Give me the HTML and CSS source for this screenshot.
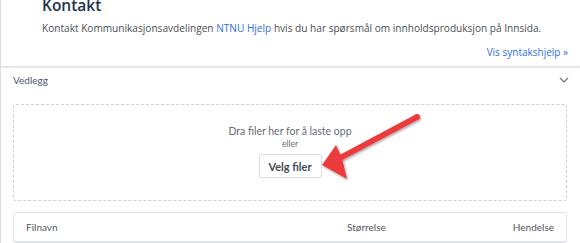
FILE: index.html
```html
<!DOCTYPE html>
<html lang="no">

<head>
  <meta charset="UTF-8">
  <meta name="viewport" content="width=device-width, initial-scale=1.0">
  <title>Vedlegg</title>
  <link rel="stylesheet" href="styles.css">
</head>

<body>
  <div class="page">
    <!-- Contact info -->
    <section class="contact">
      <h2>Kontakt</h2>
      <p>Kontakt Kommunikasjonsavdelingen <a href="#">NTNU Hjelp</a> hvis du har spørsmål om innholdsproduksjon på Innsida.</p>
      <div class="syntax"><a href="#">Vis syntakshjelp »</a></div>
    </section>

    <!-- Attachments -->
    <section class="attachments">
      <div class="attachments-header">
        <span>Vedlegg</span>
        <svg class="chevron" width="10" height="6" viewBox="0 0 10 6">
          <path d="M1 1 L5 5 L9 1" fill="none" stroke="#6b7280" stroke-width="1.2"/>
        </svg>
      </div>

      <div class="dropzone">
        <div class="drop-text">Dra filer her for å laste opp</div>
        <div class="drop-or">eller</div>
        <button class="pick">Velg filer</button>
      </div>

      <div class="files">
        <div class="files-head">
          <span>Filnavn</span>
          <span>Størrelse</span>
          <span>Hendelse</span>
        </div>
      </div>
    </section>

    <!-- Annotation arrow -->
    <svg class="arrow" width="580" height="243" viewBox="0 0 580 243">
      <defs>
        <filter id="shadow" x="-20%" y="-20%" width="140%" height="140%">
          <feDropShadow dx="1" dy="1.5" stdDeviation="1.2" flood-color="#000" flood-opacity="0.35"/>
        </filter>
      </defs>
      <g filter="url(#shadow)" fill="#ec3a3c">
        <path d="M415.6 114.4 L418.4 119.6 L341.4 160.6 L338.6 155.4 Z"/>
        <circle cx="417" cy="117" r="3"/>
        <path d="M322 165 L336 145 L342 158 L347 179 Z"/>
      </g>
    </svg>
  </div>
</body>

</html>
```

FILE: styles.css
```css
body {
  margin: 0;
  background-color: #ffffff;
  font-family: "Open Sans", Arial, sans-serif;
}

.page {
  position: relative;
  height: 243px;
  overflow: hidden;
  border-left: 1px solid #dcdde3;
}

a {
  color: #3170dd;
  text-decoration: none;
}

/* Contact info */
.contact {
  display: flow-root;
  height: 66px;
  padding: 0 12px 0 41px;
  border-bottom: 2px solid #e6e7ee;
}

.contact h2 {
  margin: -5px 0 6px;
  font-size: 15.5px;
  line-height: 20px;
  font-weight: 600;
  color: #233349;
}

.contact p {
  margin: 0;
  font-size: 10.1px;
  line-height: 14px;
  color: #4b4f56;
}

.syntax {
  margin-top: 10px;
  text-align: right;
  font-size: 10px;
  line-height: 14px;
}

/* Attachments */
.attachments {
  padding: 0 13px 0 12px;
  font-family: Lato, "Open Sans", sans-serif;
}

.attachments-header {
  display: flex;
  justify-content: space-between;
  align-items: center;
  padding-top: 5px;
  font-size: 10px;
  line-height: 14px;
  color: #4f5870;
}

.chevron {
  margin-right: -2px;
}

.dropzone {
  margin-top: 17px;
  height: 97px;
  box-sizing: border-box;
  padding-top: 19px;
  border: 1px dashed #cfd0d4;
  border-radius: 3px;
  display: flex;
  flex-direction: column;
  align-items: center;
}

.drop-text {
  font-size: 10.5px;
  line-height: 14px;
  color: #6a6d73;
}

.drop-or {
  font-size: 8.5px;
  line-height: 12px;
  color: #6a6d73;
}

.pick {
  margin-top: 4px;
  width: 63px;
  height: 24px;
  padding: 0;
  border: 1px solid #dcdde2;
  border-radius: 2px;
  background-color: #ffffff;
  font-family: Lato, sans-serif;
  font-size: 11px;
  font-weight: 700;
  color: #454a52;
}

.files {
  margin-top: 11px;
  border: 1px solid #e3e4e8;
  border-radius: 3px;
}

.files-head {
  display: grid;
  grid-template-columns: 321px 1fr auto;
  padding: 0 12px;
  height: 28px;
  align-items: center;
  border-bottom: 1px solid #e3e4e8;
  font-size: 10px;
  color: #535862;
}

/* Annotation */
.arrow {
  position: absolute;
  top: 0;
  left: -1px;
  pointer-events: none;
}
```
